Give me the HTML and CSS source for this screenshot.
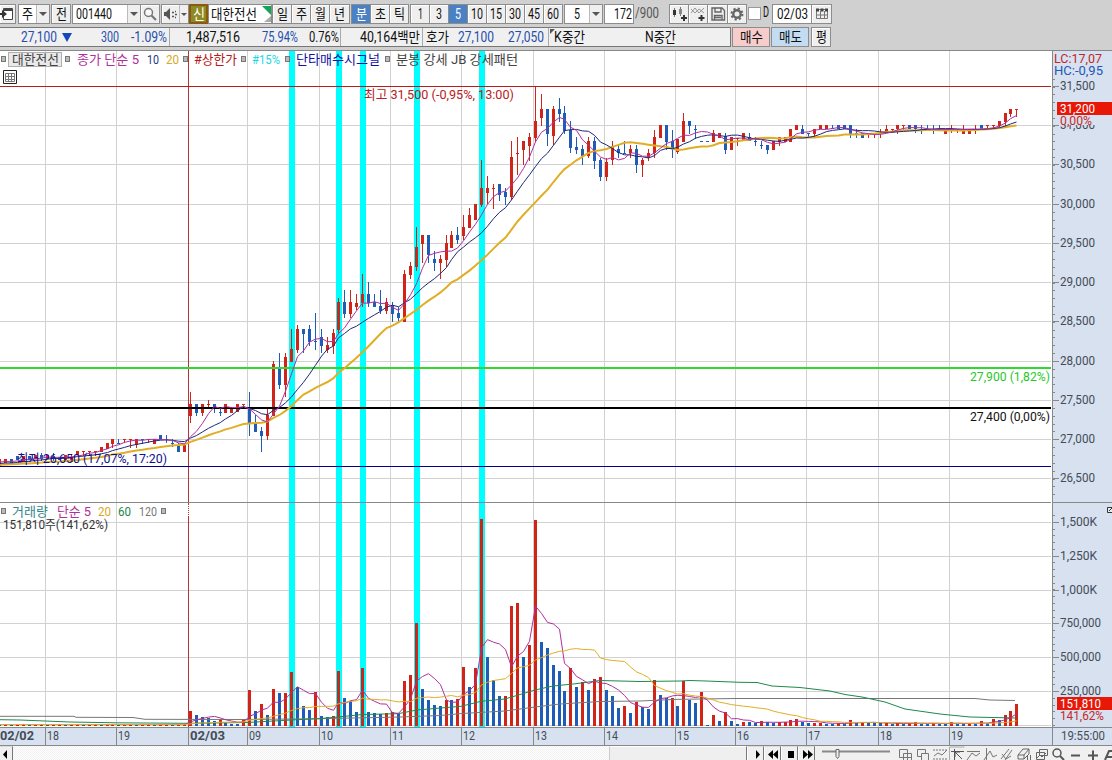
FILE: index.html
```html
<!DOCTYPE html>
<html lang="ko">
<head>
<meta charset="utf-8">
<title>대한전선 001440</title>
<link rel="stylesheet" href="styles.css">
</head>
<body>
<div class="app">
  <header class="head">
    <div class="tools">
      <span class="box w16 cut"><svg width="15" height="18"><path d="M3.500 3.500h9v11h-9z" fill="#fff" stroke="#444"/><path d="M4 5h8" stroke="#444" stroke-width="2"/><path d="M0 9h5" stroke="#333" stroke-width="2"/><path d="M2 5l5 4-5 4z" fill="#333"/></svg></span>
      <span class="box white w32 ml2"><b class="cell w17"><span data-w="11">주</span></b><b class="drop"></b></span>
      <span class="box w20 ml1"><span data-w="11">전</span></span>
      <span class="box white w68 ml1"><b class="cell w54 left"><span data-w="36">001440</span></b><b class="drop"></b></span>
      <span class="box w20 j"><svg width="18" height="18" fill="none" stroke="#777"><circle cx="7.500" cy="7.500" r="4" fill="#f8f8f8" stroke-width="1.500"/><path d="M10.500 10.500l4.500 4.500" stroke-width="2.200"/></svg></span>
      <span class="box w28 ml1"><svg width="17" height="18"><path d="M2 7h2l4-4v12l-4-4H2z" fill="#555"/><path d="M10 7.500h2M10 11.500h2M13 6.500h1M13 9.500h2M13 12.500h1" stroke="#555" stroke-width="1.500"/></svg><b class="drop thin"></b></span>
      <span class="sin"><span data-w="12">신</span></span>
      <span class="box white w64 name"><span data-w="46">대한전선</span><svg class="flag" width="9" height="18"><path d="M0 1h9v9z" fill="#14a458"/><path d="M9 11v6H2z" fill="#aaa"/></svg></span>
      <span class="box w20"><span data-w="11">일</span></span><span class="box w20 j"><span data-w="11">주</span></span><span class="box w20 j"><span data-w="11">월</span></span><span class="box w21 j"><span data-w="11">년</span></span>
      <span class="box w20 on ml1"><span data-w="11">분</span></span><span class="box w20 j"><span data-w="11">초</span></span><span class="box w20 j"><span data-w="11">틱</span></span>
      <span class="box w20 ml1"><span data-w="5">1</span></span><span class="box w20 j"><span data-w="6">3</span></span><span class="box w20 j on"><span data-w="6">5</span></span><span class="box w20 j"><span data-w="12">10</span></span><span class="box w20 j"><span data-w="12">15</span></span><span class="box w20 j"><span data-w="12">30</span></span><span class="box w20 j"><span data-w="12">45</span></span><span class="box w20 j"><span data-w="12">60</span></span>
      <span class="box white w39 ml1"><b class="cell w24"><span data-w="6">5</span></b><b class="drop"></b></span>
      <span class="box white w30 ml1 right"><span data-w="18">172</span></span>
      <span class="total"><span data-w="24">/900</span></span>
      <span class="box w20"><svg width="18" height="18"><path d="M4.500 3v9M10.500 2v9" stroke="#777"/><path d="M3 5h3v5H3z" fill="#333"/><path d="M9 4h3v5H9z" fill="#888"/><path d="M14 10v6M11 13h6" stroke="#333" stroke-width="2"/></svg></span><span class="box w20 j"><svg width="18" height="18" fill="none"><path d="M2 8l4-5 4 5 5-5M2 4l4 4 4-4 5 4" stroke="#999"/><path d="M12.500 10v6M9.500 13h6" stroke="#333" stroke-width="2"/></svg></span><span class="box w21 j"><svg width="18" height="18" fill="none" stroke="#666" stroke-width="1.400"><path d="M3 3h10l2.500 2.500V15H3zM6 3v4h6V3M5.500 15v-4.500h7.500V15M6 12.500h6"/></svg></span><span class="box w20 j"><svg width="18" height="18" fill="none" stroke="#666"><circle cx="9" cy="9" r="3.700" stroke-width="2.400"/><circle cx="9" cy="9" r="5.500" stroke-width="2" stroke-dasharray="2.200 2.120"/></svg></span>
      <span class="check"></span><span class="dee"><span data-w="6">D</span></span>
      <span class="box white w40"><span data-w="31">02/03</span></span><span class="box w21 j"><svg width="18" height="18" fill="none" stroke="#777"><path d="M3.500 4.500h11v9h-11zM7.500 6v7.500M11.500 6v7.500M3.500 10h11"/><path d="M3 5h12" stroke="#444" stroke-width="3" stroke-dasharray="3 1.500"/></svg></span>
    </div>
    <div class="tools info">
      <div class="quote">
        <div class="q q1"><span class="blue" data-w="36">27,100</span><i class="down"></i><span class="blue" data-w="18">300</span><span class="blue gap12" data-w="36">-1.09%</span></div>
        <div class="q q2"><span data-w="54">1,487,516</span><span class="blue" data-w="36">75.94%</span><span data-w="30">0.76%</span></div>
        <div class="q q3"><span data-w="60">40,164백만</span></div>
        <div class="q q4"><span data-w="23">호가</span><span class="blue" data-w="36">27,100</span><span class="blue" data-w="36">27,050</span></div>
        <div class="q q5"><i class="corner"></i><span data-w="31">K중간</span><span data-w="31">N중간</span></div>
      </div>
      <span class="box w38 buy ml1"><span data-w="23">매수</span></span>
      <span class="box w38 sell ml1"><span data-w="23">매도</span></span>
      <span class="box w20 ml2"><span data-w="11">평</span></span>
    </div>
  </header>
  <svg id="chart" class="chart" width="1112" height="696" viewBox="0 50 1112 696"></svg>
  <footer class="foot">
    <span class="arrow"><svg width="11" height="14"><path d="M7 3v9l-4-4.500z"/></svg></span>
    <span class="track"></span><span class="thumb"></span>
    <span class="key"><svg width="18" height="13"><path d="M8 3v9l4-4.500z"/></svg></span>
    <span class="key"><svg width="18" height="13"><path d="M8 3v9L3 7.500zM13 3v9L8 7.500z"/></svg></span>
    <span class="key"><svg width="18" height="13"><path d="M6 4h6v7H6z"/></svg></span>
    <span class="key"><svg width="18" height="13"><path d="M4 3v9l5-4.500zM9 3v9l5-4.500z"/></svg></span>
    <svg class="icons" width="295" height="14" viewBox="817 746 295 14" fill="none" stroke="#777">
      <path d="M822 751.500h68" stroke="#888" stroke-width="2"/><path d="M836 749.500h3v7l-1.500 2-1.500-2z" fill="#eee" stroke="#666"/>
      <path d="M899.500 749.500h8v8h-8zM903.500 753.500h8v8h-8zM907.500 754v6M904 757.500h7"/>
      <path d="M917.500 749.500h8v7h-8z"/><path d="M921.500 753.500h7v7h-7z" fill="#eee"/>
      <path d="M933 750h14M933 759h14" stroke-dasharray="2 1"/><path d="M934 756l4-3 4 2 5-5"/>
      <path d="M949.500 760v-13h15" stroke="#aaa"/><path d="M951 751.500h13M954.500 749v11M955 752l7 7M955 757v-5h5" stroke="#555"/>
      <path d="M967 751.500h13M967 760l5-7 4 3 4-3"/>
      <path d="M986.500 748v12M984 760l6-9 3 6 4-2"/>
      <path d="M1001 759l8-10M1005 760l7-10M1002 754l4 5 5-3"/>
      <path d="M1018 755l5-6h6l-5 6zM1018 755v4h6v-4M1024 759l5-5v-5M1027.500 755v5M1030.500 755v5" stroke="#666"/>
      <path d="M1039.500 749.500h8v6h-8zM1036.500 752.500h8v7h-8zM1037 758l3-3 2 2 4-4" stroke="#666"/>
      <circle cx="1057" cy="753" r="4" stroke="#555" stroke-width="1.500"/><path d="M1060 756l4 4" stroke="#555" stroke-width="2"/>
      <path d="M1071 755.500h9M1088 755.500h10M1093 750.500v9.500" stroke="#555" stroke-width="2"/>
      <path d="M1105 760l4-9h3M1107 757h5" stroke="#555" stroke-width="2"/>
    </svg>
  </footer>
</div>
<script src="chart.js"></script>
</body>
</html>
```

FILE: styles.css
```css
* { box-sizing: border-box; }
body { margin: 0; font-family: Roboto, "Noto Sans CJK KR", sans-serif; font-size: 14px; color: #111; }
.app { width: 1112px; height: 760px; display: grid; grid-template-rows: 50px 696px 14px; overflow: hidden; background: #fff; }
.head { background: #d0d0d0; padding-top: 4px; display: flex; flex-direction: column; gap: 3px; overflow: hidden; }
.tools { display: flex; height: 20px; line-height: 17px; white-space: nowrap; }
[data-w] { display: inline-block; transform-origin: 0 50%; flex: none; }
.box { flex: none; height: 20px; border: 1px solid #8c8c8c; background: #efefef; display: flex; justify-content: center; align-items: center; overflow: hidden; box-shadow: inset 1px 1px #fff; }
.box svg { flex: none; }
.box b { font-weight: 400; }
.white { background: #fff; }
.cut { border-left: 0; }
.on { background: #4a80c4; color: #fff; box-shadow: none; }
.j { margin-left: -1px; }
.ml1 { margin-left: 1px; }
.ml2 { margin-left: 2px; }
.w16 { width: 16px; } .w20 { width: 20px; } .w21 { width: 21px; } .w28 { width: 28px; }
.w30 { width: 30px; } .w32 { width: 32px; } .w38 { width: 38px; } .w39 { width: 39px; }
.w40 { width: 40px; } .w64 { width: 64px; } .w68 { width: 69px; }
.cell { flex: 1; display: flex; justify-content: center; }
.left { justify-content: flex-start; padding-left: 3px; }
.right { justify-content: flex-end; padding-right: 1px; }
.drop { width: 13px; height: 18px; background: #efefef; border-left: 1px solid #bbb; display: flex; align-items: center; justify-content: center; flex: none; }
.drop::after { content: ""; border: 4px solid transparent; border-top-color: #555; border-bottom: 0; }
.thin { width: 10px; }
.thin::after { border-width: 3px; border-bottom: 0; }
.sin { width: 19px; height: 20px; background: #8d8a22; border: 2px solid #8a5a12; color: #fff; display: flex; align-items: center; justify-content: center; flex: none; }
.name { justify-content: space-between; padding-left: 2px; }
.total { width: 35px; color: #555; display: flex; padding: 1px 0 0 1px; }
.check { width: 13px; height: 13px; border: 1px solid #999; background: #fff; margin: 3px 2px 0 1px; }
.dee { width: 9px; }
.quote { width: 731px; border: 1px solid #777; border-left: 0; background: #f0f0f0; display: flex; }
.q { display: flex; align-items: center; flex: none; border-right: 1px solid #aaa; padding-top: 1px; }
.blue { color: #1f4fae; }
.q1 { width: 170px; padding-left: 21px; }
.down { border: 5px solid transparent; border-top: 9px solid #1448b8; border-bottom: 0; margin: 0 29px 0 5px; }
.gap12 { margin-left: 12px; }
.q2 { width: 171px; padding-left: 16px; gap: 22px; }
.q2 span:last-child { margin-left: -11px; }
.q3 { width: 82px; padding-left: 19px; }
.q4 { width: 126px; padding-left: 3px; gap: 9px; }
.q4 span:last-child { margin-left: 5px; }
.q5 { width: 181px; padding-left: 1px; gap: 60px; border: 0; }
.corner { border-top: 5px solid #555; border-right: 5px solid transparent; align-self: flex-start; margin-right: -61px; }
.buy { background: #f6cdcb; box-shadow: none; }
.sell { background: #c3dcf2; box-shadow: none; }
.chart { display: block; }
.chart text { font-family: Roboto, "Noto Sans CJK KR", sans-serif; font-size: 13px; }
.chart .date { font-weight: 700; }
.foot { display: flex; background: #f0f0f0; overflow: hidden; }
.foot > * { flex: none; }
.arrow { width: 13px; border-right: 1px solid #777; border-top: 1px solid #ddd; }
.track { width: 596px; background: repeating-conic-gradient(#f1f1f1 0 25%, #fff 0 50%) 0 0 / 2px 2px; }
.thumb { width: 138px; background: #efefef; border-left: 1px solid #ccc; border-top: 1px solid #fff; border-right: 1px solid #777; }
.key { width: 17px; height: 14px; border-left: 1px solid #fff; border-right: 1px solid #777; border-top: 1px solid #ddd; background: #f0f0f0; }
.icons { display: block; margin-left: 2px; }
```

FILE: chart.js
```js
// Squeeze each label to the column width it is given
document.querySelectorAll('[data-w]').forEach(function (el) {
  var w = +el.dataset.w, own = el.getBoundingClientRect().width;
  el.style.transform = 'scaleX(' + w / own + ')';
  el.style.marginRight = (w - own) + 'px';
});

var RED = '#d02418', BLUE = '#1e5cb8', out = [];
function rect(x, y, w, h, c) { out.push('<rect x="' + x + '" y="' + y + '" width="' + w + '" height="' + h + '" fill="' + c + '" shape-rendering="crispEdges"/>'); }
function hl(y, c, h) { rect(0, y, 1051, h || 1, c); }
function text(x, y, w, s, c, cls) { out.push('<text x="' + x + '" y="' + y + '" textLength="' + w + '" lengthAdjust="spacingAndGlyphs" fill="' + c + '"' + (cls ? ' class="' + cls + '"' : '') + '>' + s + '</text>'); }
function line(pts, c, w, extra) { out.push('<polyline points="' + pts.map(function (p) { return p[0].toFixed(1) + ',' + p[1].toFixed(1); }).join(' ') + '" fill="none" stroke="' + c + '" stroke-width="' + w + '" ' + (extra || '') + '/>'); }
function square(x, y) { out.push('<rect x="' + (x + .5) + '" y="' + (y + .5) + '" width="4" height="5" fill="#bbb" stroke="#777"/>'); }

// Candles: colour, body top, body bottom, wick top, wick bottom, in thirds of a pixel
// from the panel origin given with each run.
var runs = [
  [400, 'r177-198 r177-190 b177-190 b168-180 r168-182 b168-180 r165-178 b165-178,160,182 r165-178 b168-172,160,182 b170-180 r165-180 r172-185,165 r153-166 r154-156,153,167 r154-156,153,167 r154-156,153,167 r141-155 r129-147 r117-132,117,144 b129-131,117,132 r118-120,117,130 r118-120,117,144 r117-135,117,144 b118-120,117,132 r118-120,117,130 r117-131 b105-120 b118-120,105,130 b129-131,117,141 b138-156,129 r132-156'],
  [260, 'r432-467,396,490 b432-458,432,467 r432-458,432,467 r432-434,420,445 b432-445,432,458 b456-458,447,467 r432-458 r445-458 r432-455 r433-435,433,440 b445-491,396,527 b489-515,464 b513-527,501,575 r464-527,447,540 r311-467,303 b322-375,279,387 r291-375,279,410 r267-305,207 r207-270,195,280 b207-222,207,280 b207-245,195,257 b243-246,159,270 b231-257,207,280 r255-269,231,280 r219-258,207,282 r126-210,114,222 b126-162,90,173 r126-162,90,173 r129-140,102,150 r102-129,42,140 b102-129,66,140 b126-140,102 b138-153,90,162 r126-153,114,162 b138-162,126,186 b159-174,140,186 r42-186,30'],
  [120, 'r438-465,426,477 r381-440,321,453 r346-371,346,430 b346-406,346,430 b417-429,394,453 r417-430,405,477 r369-420,345,441 r345-383,333 b345-360,321,371 r321-348,285,360 r285-323,264 r252-299 r204-255,120,262 r204-219,168,252 r204-206,192,266 b192-225,192,243 b216-230,204,255'],
  [70, 'r261-381,213,390 r249-251,201,315 r213-240,213,285 r201-228,189,273 r153-204,50,216 r117-144,72,167 b117-192,117,228 r117-198,108,225 b117-132,84,155 b129-183,108,192 b180-234,153,250 b231-240,201,252 b237-258,225,285 r213-258,201,264 b213-273,201,297 b270-321,264,333 r276-321,264,333 r228-270,213,285 b237-250,225,264 b249-251,213,251 r237-250,225,264 b237-285,225,308 r270-285,264,321 r250-264,237,273 r201-250,180,264 r165-204 b165-216,165,240 b213-237,180,264 r207-246,207,252 r153-216,129 b153-168,153,192 b177-179,165,207 b213-215 b213-215 r189-216,180 r189-204 b198-240,189,252 r201-240 r203-205,203,228 r189-213 b201-213,189 b213-215,201,228 b225-227,213,237 b225-240,225,252'],
  [90, 'r153-180 r141-156,141,168 r141-156 r117-156 r105-120 b117-132,105 b130-132,130,144 r117-132,117,144 r105-118 r105-118 b115-118,105 b105-118 b105-118 b105-132,105,144 b129-131,117,144 b129-144 r130-132,130,144 r130-132,130,144 r130-132,117,144 r117-130,105 r118-120,118,130 r105-118,105,132 r106-108,106,120 b105-118 b105-118,105,130 b117-119,105,132 b117-119,105,120 b117-119,105,132 b117-119,105,120 r118-132 r117-119,105,130 r117-119,117,130 r118-132,105 r118-132 r117-119,105,132 b105-120 r106-108,106,118 r106-108,106,118 r93-108,93,118 r69-96,69,108 r57-72,57,82 r57-59,57,82']
];
var candles = [];
runs.forEach(function (run) {
  run[1].split(' ').forEach(function (s) {
    var p = s.slice(1).split(/[-,]/).map(function (v) { return run[0] + v / 3; });
    candles.push({ up: s[0] === 'r', t: p[0], b: p[1], hi: p[2] || p[0], lo: p[3] || p[1] });
  });
});
var FIRST = -32, STEP = 5.947;
function cx(k) { return Math.round(189.8 + STEP * k); }
function average(values, n, k0, pad) {
  var all = Array(n).fill(pad).concat(values);
  return values.map(function (_, i) {
    var sum = 0;
    for (var j = i + 1; j <= i + n; j++) sum += all[j];
    return [cx(i + k0) + .5, sum / n];
  });
}

// Grid
var hours = [[45, '18'], [116, '19'], [247, '09'], [319, '10'], [390, '11'], [461, '12'], [533, '13'], [604, '14'], [675, '15'], [735, '16'], [806, '17'], [878, '18'], [949, '19']];
var prices = [[86, '31,500'], [125, '31,000'], [164, '30,500'], [204, '30,000'], [243, '29,500'], [282, '29,000'], [321, '28,500'], [361, '28,000'], [400, '27,500'], [439, '27,000'], [478, '26,500']];
var amounts = [[522, '1,500K'], [556, '1,250K'], [590, '1,000K'], [623, '750,000'], [657, '500,000'], [691, '250,000']];
rect(0, 50, 1112, 696, '#fff');
hours.forEach(function (h) { rect(h[0], 51, 1, 676, '#d2d2d2'); });
prices.concat(amounts).forEach(function (p) { hl(p[0], '#d2d2d2'); });
hl(725, '#d2d2d2');
[289, 336, 360, 414, 479].forEach(function (x) { rect(x, 51, 6, 676, '#00ffff'); });
rect(188, 51, 1, 676, '#b83434');

// Candles and price averages
candles.forEach(function (c, i) {
  var x = cx(i + FIRST), col = c.up ? RED : BLUE;
  rect(x, Math.round(c.hi), 1, Math.max(1, Math.round(c.lo) - Math.round(c.hi)), col);
  rect(x - 1, Math.round(c.t), 3, Math.max(1, Math.round(c.b) - Math.round(c.t)), col);
});
hl(367, '#30d830', 2);
hl(407, '#000', 2);
hl(466, '#000090');
hl(86, '#b81c1c');
var closes = candles.map(function (c) { return c.up ? c.t : c.b; });
line(average(closes, 20, FIRST, 465), '#e0ae24', 2);
line(average(closes, 10, FIRST, 464), '#1c2878', 1);
line(average(closes, 5, FIRST, 463), '#b030a0', 1);

// Volume: bar tops in thirds of a pixel below y=500
var tops = '633 645 651 654 663 657 670 671 672 661 571 633 613 645 568 579 579 517 560 618 630 577 648 651 648 514 594 604 636 505 636 639 643 639 636 642 543 525 370 567 600 615 618 600 601 597 501 561 504 57 471 540 588 587 318 309 471 435 60 426 444 495 513 573 504 561 546 570 537 531 570 588 624 618 639 606 621 627 540 585 594 593 618 543 600 609 576 675 645 663 636 663 672 666 667 670 663 667 668 667 667 661 657 666 670 669 668 671 672 670 671 661 670 667 668 669 670 669 671 670 671 670 667 671 672 670 671 672 666 671 672 670 671 663 670 658 659 645 633 612'.split(' ').map(Number);
for (var n = 0; n < 32; n++) tops.unshift(n % 3 ? 674 : 673);
tops.forEach(function (t, i) {
  var y = Math.round(500 + t / 3);
  rect(cx(i + FIRST) - 1, y, 3, 726 - y, i && t <= tops[i - 1] ? RED : BLUE);
});
var vols = tops.map(function (t) { return 500 + t / 3; });
line([[0, 716.3], [74, 716.3], [76, 717.3], [133, 717.5], [145, 719.3], [247, 719.5], [319, 718.7], [400, 717], [440, 715.5], [462, 713.5], [505, 711], [535, 707], [560, 704], [600, 701.5], [640, 701], [675, 699.4], [735, 698.5], [975, 698.5], [990, 700], [1015, 700.5]], '#777', 1);
line([[0, 719.7], [20, 720], [45, 721], [70, 722], [116, 722.8], [188, 723.3], [247, 722.5], [291, 720], [319, 718.7], [338, 717], [362, 714.5], [398, 713.7], [417, 710], [461, 706.3], [481, 701.3], [505, 699], [535, 690], [553, 686], [576, 683.7], [600, 680.5], [640, 681.5], [680, 681], [690, 680.5], [706, 681], [740, 682.3], [757, 682.5], [772, 686], [800, 687.5], [830, 691], [845, 694.5], [862, 697], [885, 702], [905, 709], [940, 714], [970, 717], [1016, 718]], '#208848', 1);
line(average(vols, 5, FIRST, 724.5), '#b030a0', 1);
line(average(vols, 20, FIRST, 724.5), '#e0ae24', 1);

// Chart labels
rect(8, 52, 54, 15, '#b0b0b0'); rect(9, 53, 52, 13, '#e9e9e9');
[1, 65, 183, 241, 285, 385].forEach(function (x) { square(x, 56); });
text(12, 64, 47, '대한전선', '#444');
text(77, 64, 62, '종가 단순 5', '#b0309a');
text(147, 64, 12, '10', '#243484');
text(166, 64, 13, '20', '#d8a828');
text(194, 64, 43, '#상한가', '#b81818');
text(252, 64, 28, '#15%', '#22d8e0');
text(296, 64, 84, '단타매수시그널', '#1010a8');
text(396, 64, 122, '분봉 강세 JB 강세패턴', '#444');
out.push('<path d="M3.500 70.500h13v13h-13z" fill="#fff" stroke="#222"/><path d="M5.500 73.500h9v8h-9zM5.500 76.500h9M5.500 79.500h9M8.500 73v9M11.500 73v9" fill="none" stroke="#777"/>');
text(364, 99, 150, '최고 31,500 (-0,95%, 13:00)', '#b82020');
text(17, 463, 150, '최저 26,650 (17,07%, 17:20)', '#101090');
text(970, 381, 80, '27,900 (1,82%)', '#28c828');
text(970, 421, 80, '27,400 (0,00%)', '#111');
hl(502, '#888');
square(1, 508); square(161, 508);
text(12, 516, 36, '거래량', '#308888');
text(57, 516, 34, '단순 5', '#b0309a');
text(98, 516, 13, '20', '#d8a828');
text(118, 516, 13, '60', '#208848');
text(139, 516, 18, '120', '#777');
text(3, 529, 105, '151,810주(141,62%)', '#333');
out.push('<path d="M188.500 505v12" stroke="#fff" stroke-dasharray="1 1"/>');

// Price and time scales
rect(1053, 51, 59, 695, '#d7e1ef');
rect(0, 728, 1112, 17, '#d7e1ef');
rect(0, 50, 1112, 1, '#888'); rect(1052, 51, 1, 695, '#888');
rect(1053, 502, 59, 1, '#888');
rect(0, 727, 1112, 1, '#888'); rect(0, 745, 1112, 1, '#888');
for (var y = 78.700; y < 500; y += 7.840) rect(1053, Math.round(y), 2, 1, '#888');
for (y = 515; y < 726; y += 6.770) rect(1053, Math.round(y), 2, 1, '#888');
prices.concat(amounts).forEach(function (p) {
  rect(1053, p[0], 6, 1, '#888');
  text(1060, p[0] + 4, p[1].length === 7 ? 41 : p[1].indexOf('K') > 0 ? 37 : 35, p[1], '#444c58');
});
text(1054, 63, 48, 'LC:17,07', '#c02828');
text(1054, 75, 49, 'HC:-0,95', '#2058b8');
rect(1060, 115, 52, 10, '#d7e1ef');
rect(1057, 102, 55, 13, '#e81808');
text(1060, 113, 35, '31,200', '#fff');
text(1060, 125, 32, '0,00%', '#c82828');
rect(1057, 697, 55, 13, '#e81808');
text(1060, 708, 41, '151,810', '#fff');
text(1060, 720, 44, '141,62%', '#c82828');
text(1061, 740, 44, '19:55:00', '#444c58');
out.push('<path d="M1107.500 507.500h6v5h-6z" fill="#eee" stroke="#333"/><path d="M1109 511l3-3" stroke="#333"/>');
hours.forEach(function (h) { rect(h[0], 728, 1, 17, '#888'); text(h[0] + 2, 740, 12, h[1], '#444c58'); });
rect(188, 728, 1, 17, '#888');
text(0, 740, 34, '02/02', '#444c58', 'date');
text(190, 740, 35, '02/03', '#444c58', 'date');
document.getElementById('chart').innerHTML = out.join('');
```
